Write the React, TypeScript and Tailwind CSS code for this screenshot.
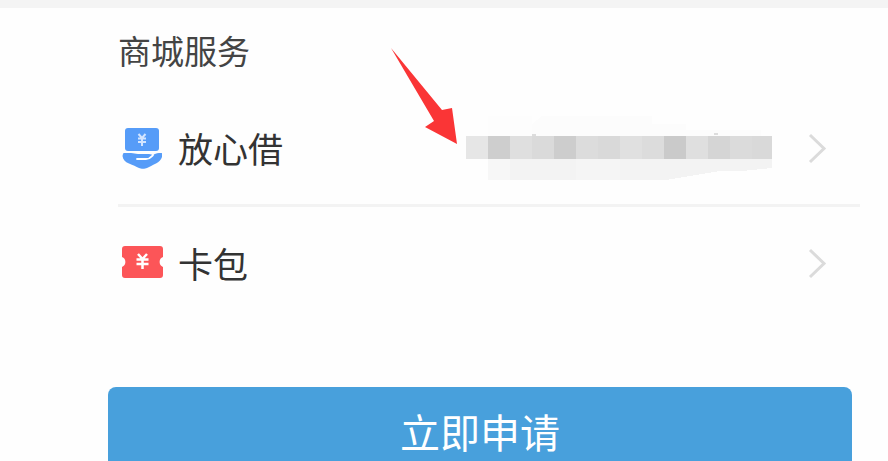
import type { ReactNode } from 'react';

const maskTones = [
  '#e6e6e6', '#cecece', '#dfdfdf', '#dadada', '#cdcdcd', '#dcdcdc', '#d9d9d9',
  '#e0e0e0', '#dcdcdc', '#cacaca', '#dfdfdf', '#d5d5d5', '#dbdbdb', '#d9d9d9',
];

function LoanIcon() {
  return (
    <svg className="w-10 h-11 shrink-0" viewBox="0 0 40 44" fill="none" aria-hidden="true">
      <rect x="3" y="2" width="34" height="23" rx="3" fill="#569cf8" />
      <path d="M16.500 8l3.500 4 3.500-4M16 12.500h8M16 16h8M20 12v8" stroke="#d3e5ff" strokeWidth="2" />
      <path d="M2 27h7c3 0 4 1 7 1h11c2 0 3 1 4 1 2-1 3-2 6-2h2c2 0 2 2 1 4-1 3-3 5-6 6.500-4 2-6 3-9 4.500-2 1-6 1-8 0-3-1.500-6-3-10-4.500-4-1.500-6-4-6.500-7.500C1 28 1 27 2 27z" fill="#569cf8" />
      <path d="M15 33h9c4 0 5-2 7-4" stroke="#fff" strokeWidth="1.800" strokeLinecap="round" />
    </svg>
  );
}

function CardIcon() {
  return (
    <svg className="w-10 h-11 shrink-0 overflow-visible" viewBox="0 0 40 44" fill="none" aria-hidden="true">
      <path d="M3 5h35c2 0 3 1 3 3v8c-4 1-5 8 0 10v8c0 2-1 3-3 3H3c-2 0-3-1-3-3v-8c5-2 4-9 0-10V8c0-2 1-3 3-3z" fill="#fc5558" />
      <path d="M16 13l4.500 5L25 13M14.500 18.500h12M14.500 23h12M20.500 18v10" stroke="#fff" strokeWidth="2.500" />
    </svg>
  );
}

function Chevron() {
  return (
    <svg className="w-5 h-8 shrink-0" viewBox="0 0 20 32" fill="none" aria-hidden="true">
      <path d="M2 3l14 13.500L2 30" stroke="#dbdbdb" strokeWidth="3" />
    </svg>
  );
}

function MaskedAmount() {
  return (
    <svg className="-my-2 w-[306px] h-16 shrink-0" viewBox="0 0 306 64" shapeRendering="crispEdges" aria-hidden="true">
      <path d="M22 0h44v20H22z" fill="#fdfdfd" />
      <path d="M76 0h110v8h34v12H66V8z" fill="#fcfcfc" />
      <path d="M220 14h75v6h-75z" fill="#fcfcfc" />
      <path d="M22 42h284v10l-30 3h-22l-54 9H22z" fill="#f3f3f3" />
      <path d="M22 42h22v22H22z" fill="#f7f7f7" />
      <path d="M110 42h44v22h-44z" fill="#f5f5f5" />
      {maskTones.map((tone, i) => (
        <rect key={i} x={i * 22} y="20" width="22" height="23" fill={tone} />
      ))}
      <path d="M66 18h4v2h-4zM248 17h4v2h-4z" fill="#ddd" />
    </svg>
  );
}

function ServiceRow({ icon, label, children }: { icon: ReactNode; label: string; children?: ReactNode }) {
  return (
    <a href="#" className="flex items-center py-8 pl-1 pr-8">
      {icon}
      <span className="ml-4 text-[35px] leading-12 text-[#333]">{label}</span>
      <span className="ml-auto flex items-center gap-9">
        {children}
        <Chevron />
      </span>
    </a>
  );
}

export default function App() {
  return (
    <div className="h-screen overflow-hidden bg-[#fefefe] font-['Noto_Sans_CJK_SC',sans-serif]">
      <div className="h-2 bg-[#f4f4f4]" />
      <main className="pt-5">
        <section className="relative ml-[118px] mr-7">
          <h2 className="text-[33px] leading-11 text-[#444]">商城服务</h2>
          <div className="mt-5 border-b-3 border-[#f3f3f3]">
            <ServiceRow icon={<LoanIcon />} label="放心借">
              <MaskedAmount />
            </ServiceRow>
          </div>
          <ServiceRow icon={<CardIcon />} label="卡包" />
          <svg
            className="absolute top-5 right-[401px] w-17 h-24"
            viewBox="0 0 68 96"
            aria-hidden="true"
          >
            <path d="M0 0L51 62L61 60L66 96L34 79L43 73Z" fill="#fa3536" />
          </svg>
        </section>
        <div className="mt-17 ml-27 mr-9">
          <button type="button" className="w-full rounded-lg bg-[#48a0dc] py-5 text-[40px] leading-12 text-white">
            立即申请
          </button>
        </div>
      </main>
    </div>
  );
}
